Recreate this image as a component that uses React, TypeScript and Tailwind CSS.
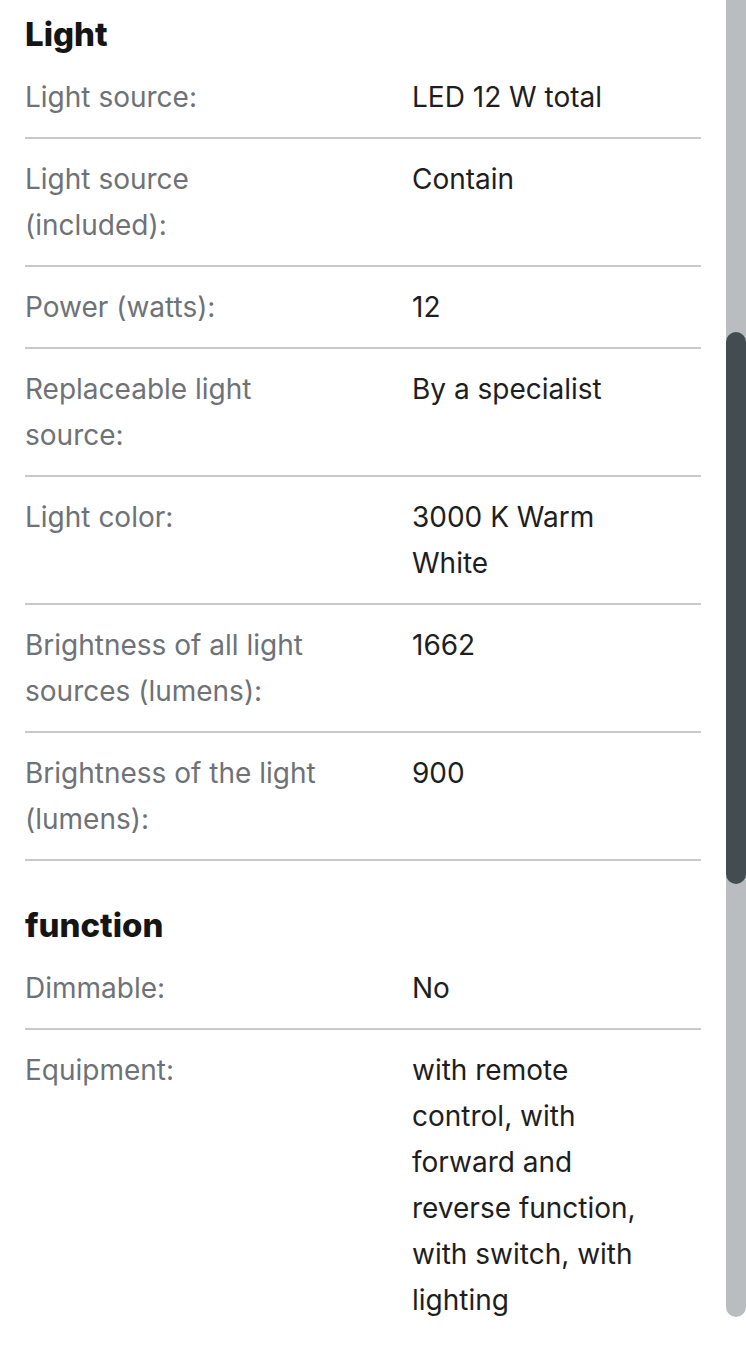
import React from 'react';

const light = [
  { label: 'Light source:', value: 'LED 12 W total' },
  { label: 'Light source (included):', value: 'Contain' },
  { label: 'Power (watts):', value: '12' },
  { label: 'Replaceable light source:', value: 'By a specialist' },
  { label: 'Light color:', value: '3000 K Warm White' },
  { label: 'Brightness of all light sources (lumens):', value: '1662' },
  { label: 'Brightness of the light (lumens):', value: '900' },
];

const func = [
  { label: 'Dimmable:', value: 'No' },
  {
    label: 'Equipment:',
    value: 'with remote control, with forward and reverse function, with switch, with lighting',
  },
];

function SpecRow({ label, value }: { label: string; value: string }) {
  return (
    <div className="grid grid-cols-[387px_1fr] border-b-2 border-[#c9c9c9] py-[17px] text-[28px] leading-[46px]">
      <div className="max-w-[302px] text-[#6e7277]">{label}</div>
      <div className="max-w-[240px] text-[#1e1e1e]">{value}</div>
    </div>
  );
}

export default function App() {
  return (
    <div className="h-[1350px] bg-white flex flex-col" style={{ fontFamily: 'Inter, "Noto Sans", sans-serif' }}>
      <div className="flex h-[1317px]">
        {/* Spec table */}
        <div className="flex-1 overflow-hidden px-[25px]">
          <h2 className="pt-[11px] text-[33px] leading-[46px] font-extrabold text-[#151515]">Light</h2>
          {light.map(r => (
            <SpecRow key={r.label} {...r} />
          ))}

          <h2 className="pt-[41px] text-[33px] leading-[46px] font-extrabold text-[#151515]">function</h2>
          {func.map(r => (
            <SpecRow key={r.label} {...r} />
          ))}
        </div>

        {/* Scrollbar */}
        <div className="w-[20px] bg-[#b9bdc0] rounded-b-[10px] pt-[332px]">
          <div className="h-[552px] rounded-[10px] bg-[#434c50]" />
        </div>
      </div>
      <div className="flex-1 bg-white" />
    </div>
  );
}
